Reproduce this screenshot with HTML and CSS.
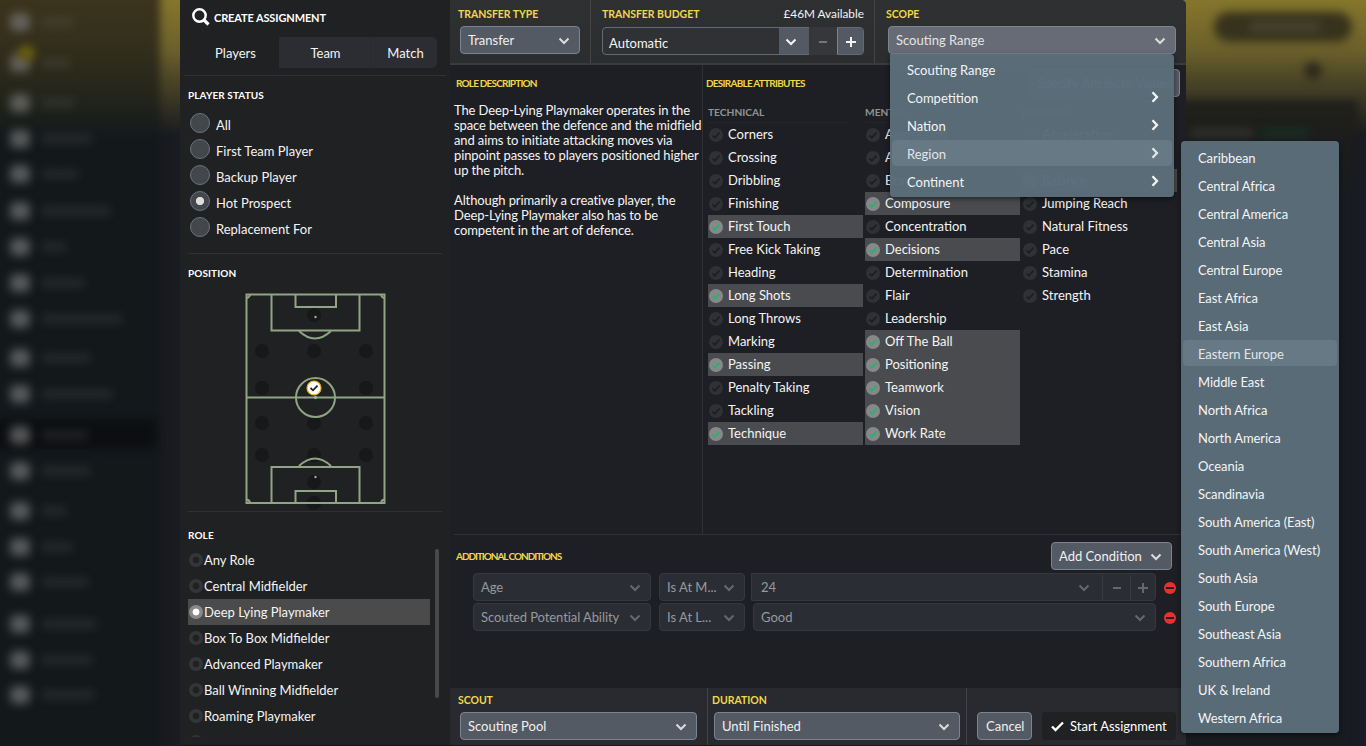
FILE: index.html
```html
<!DOCTYPE html>
<html lang="en">
<head>
    <meta charset="UTF-8">
    <meta name="viewport" content="width=device-width, initial-scale=1.0">
    <title>Create Assignment</title>
    <link rel="stylesheet" href="styles.css">
</head>
<body>
    <!-- Shared icons -->
    <svg class="sprite" width="0" height="0">
        <symbol id="down" viewBox="0 0 12 8"><path d="M1.5 1.5 6 6l4.500-4.500" fill="none" stroke="currentColor" stroke-width="2"/></symbol>
        <symbol id="right" viewBox="0 0 8 12"><path d="M1.500 1.200 6 6l-4.500 4.800" fill="none" stroke="currentColor" stroke-width="2.300"/></symbol>
        <symbol id="minus" viewBox="0 0 10 10"><path d="M1 5h8" stroke="currentColor" stroke-width="2"/></symbol>
        <symbol id="plus" viewBox="0 0 10 10"><path d="M0 5h10M5 0v10" stroke="currentColor" stroke-width="2"/></symbol>
        <symbol id="tick" viewBox="0 0 14 14"><circle class="disc" cx="7" cy="7" r="7"/><path class="mark" d="m3.500 7.500 2.300 2.200 4.700-5" fill="none"/></symbol>
        <symbol id="remove" viewBox="0 0 12 12"><circle cx="6" cy="6" r="6" fill="#e83030"/><path d="M2 6h8" stroke="#1e1f23" stroke-width="2"/></symbol>
    </svg>

    <div class="backdrop">
        <div class="glow"></div>
        <div class="nav"></div>
        <div class="nav-active"></div>
        <div class="pill"></div>
        <div class="pill-text"></div>
        <div class="dot"></div>
        <div class="card"></div>
        <div class="card-text"></div>
        <div class="card-green"></div>
        <div id="navItems"></div>
    </div>

    <div class="dialog">
        <aside class="side">
            <header class="side-head">
                <svg width="18" height="18" viewBox="0 0 18 18"><circle cx="7.500" cy="7.500" r="6.200" fill="none" stroke="#fff" stroke-width="2.500"/><path d="m12 12 4.500 4.500" stroke="#fff" stroke-width="3.200"/></svg>
                <h1>CREATE ASSIGNMENT</h1>
            </header>
            <div class="tabs">
                <span class="tab active">Players</span>
                <span class="tab">Team</span>
                <span class="tab">Match</span>
            </div>

            <section class="status">
                <h2>PLAYER STATUS</h2>
                <div class="radio"><i></i><span>All</span></div>
                <div class="radio"><i></i><span>First Team Player</span></div>
                <div class="radio"><i></i><span>Backup Player</span></div>
                <div class="radio on"><i></i><span>Hot Prospect</span></div>
                <div class="radio"><i></i><span>Replacement For</span></div>
            </section>

            <section class="position">
                <h2>POSITION</h2>
                <svg class="pitch" width="142" height="220" viewBox="0 0 142 220">
                    <g fill="#161819">
                        <circle cx="70" cy="24" r="7"/>
                        <circle cx="18" cy="60" r="7"/><circle cx="70" cy="60" r="7"/><circle cx="122" cy="60" r="7"/>
                        <circle cx="18" cy="97" r="7"/><circle cx="122" cy="97" r="7"/>
                        <circle cx="18" cy="132" r="7"/><circle cx="70" cy="132" r="7"/><circle cx="122" cy="132" r="7"/>
                        <circle cx="18" cy="164" r="7"/><circle cx="70" cy="164" r="7"/><circle cx="122" cy="164" r="7"/>
                        <circle cx="70" cy="191" r="7"/><circle cx="70" cy="212" r="7"/>
                    </g>
                    <g fill="none" stroke="#8fa584" stroke-width="2">
                        <path d="M2.500 3.500h138v208.500H2.500zM2.500 106.500h138"/>
                        <path d="M27.500 3.500v36h88v-36M51.500 3.500v12.500h40.500V3.500"/>
                        <path d="M27.500 212v-36h88v36M51.500 212v-12h40.500v12"/>
                        <path d="M55 40q16 15 32 0M55 175q16-15 32 0" />
                        <circle cx="71.500" cy="106.500" r="19.500"/>
                        <path d="M2.500 7a4 4 0 0 0 3.500-3.500M140.500 7a4 4 0 0 1-3.500-3.500M2.500 208.500a4 4 0 0 1 3.500 3.500M140.500 208.500a4 4 0 0 0-3.500 3.500"/>
                    </g>
                    <g fill="#9bb38e"><circle cx="71.500" cy="26" r="1.200"/><circle cx="71.500" cy="106.500" r="1.700"/><circle cx="71.500" cy="186" r="1.200"/></g>
                    <circle cx="70" cy="97" r="7" fill="#fff" stroke="#eab51a" stroke-width="1.200"/>
                    <path d="m66.500 97 2.500 2.300 4.500-4.600" fill="none" stroke="#202123" stroke-width="1.800"/>
                </svg>
            </section>

            <section class="role">
                <h2>ROLE</h2>
                <div class="role-list">
                    <div class="role-item"><i></i>Any Role</div>
                    <div class="role-item"><i></i>Central Midfielder</div>
                    <div class="role-item on"><i></i>Deep Lying Playmaker</div>
                    <div class="role-item"><i></i>Box To Box Midfielder</div>
                    <div class="role-item"><i></i>Advanced Playmaker</div>
                    <div class="role-item"><i></i>Ball Winning Midfielder</div>
                    <div class="role-item"><i></i>Roaming Playmaker</div>
                    <div class="role-item"><i></i></div>
                    <div class="scrollbar"></div>
                </div>
            </section>
        </aside>

        <main class="main">
            <div class="topbar">
                <div class="cell type">
                    <h3>TRANSFER TYPE</h3>
                    <div class="select">Transfer<svg width="12" height="8"><use href="#down"/></svg></div>
                </div>
                <div class="cell budget">
                    <div class="budget-head"><h3>TRANSFER BUDGET</h3><span>£46M Available</span></div>
                    <div class="stepper">
                        <span class="value">Automatic</span>
                        <span class="step drop"><svg width="12" height="8"><use href="#down"/></svg></span>
                        <span class="step off"><svg width="10" height="10"><use href="#minus"/></svg></span>
                        <span class="step add"><svg width="10" height="10"><use href="#plus"/></svg></span>
                    </div>
                </div>
                <div class="cell scope">
                    <h3>SCOPE</h3>
                    <div class="select open">Scouting Range<svg width="12" height="8"><use href="#down"/></svg></div>
                </div>
            </div>

            <div class="middle">
                <section class="description">
                    <h3 class="tight">ROLE DESCRIPTION</h3>
                    <p>The Deep-Lying Playmaker operates in the<br>space between the defence and the midfield<br>and aims to initiate attacking moves via<br>pinpoint passes to players positioned higher<br>up the pitch.</p>
                    <p>Although primarily a creative player, the<br>Deep-Lying Playmaker also has to be<br>competent in the art of defence.</p>
                </section>
                <section class="attributes">
                    <div class="attr-head">
                        <h3 class="tight">DESIRABLE ATTRIBUTES</h3>
                        <div class="select specify">Specify Attribute Values</div>
                    </div>
                    <div class="attr-cols" id="attributes"></div>
                </section>
            </div>

            <section class="conditions">
                <div class="cond-head">
                    <h3 class="tight tighter">ADDITIONAL CONDITIONS</h3>
                    <div class="select">Add Condition<svg width="12" height="8"><use href="#down"/></svg></div>
                </div>
                <div class="cond">
                    <div class="select dim name">Age<svg width="12" height="8"><use href="#down"/></svg></div>
                    <div class="select dim op">Is At M...<svg width="12" height="8"><use href="#down"/></svg></div>
                    <div class="select dim number">
                        <span class="value">24</span>
                        <svg width="12" height="8"><use href="#down"/></svg>
                        <span class="mini"><svg width="10" height="10"><use href="#minus"/></svg></span>
                        <span class="mini last"><svg width="10" height="10"><use href="#plus"/></svg></span>
                    </div>
                    <svg class="remove" width="12" height="12"><use href="#remove"/></svg>
                </div>
                <div class="cond">
                    <div class="select dim name">Scouted Potential Ability<svg width="12" height="8"><use href="#down"/></svg></div>
                    <div class="select dim op">Is At L...<svg width="12" height="8"><use href="#down"/></svg></div>
                    <div class="select dim grade">Good<svg width="12" height="8"><use href="#down"/></svg></div>
                    <svg class="remove" width="12" height="12"><use href="#remove"/></svg>
                </div>
            </section>

            <footer class="bottombar">
                <div class="cell scout">
                    <h3>SCOUT</h3>
                    <div class="select">Scouting Pool<svg width="12" height="8"><use href="#down"/></svg></div>
                </div>
                <div class="cell duration">
                    <h3>DURATION</h3>
                    <div class="select">Until Finished<svg width="12" height="8"><use href="#down"/></svg></div>
                </div>
                <div class="cell actions">
                    <span class="select cancel">Cancel</span>
                    <span class="start"><svg width="13" height="11" viewBox="0 0 13 11"><path d="m1 5.500 3.500 3.500L12 1.500" fill="none" stroke="#fff" stroke-width="2.400"/></svg>Start Assignment</span>
                </div>
            </footer>
        </main>
    </div>

    <div class="menu scope-menu">
        <div class="item">Scouting Range</div>
        <div class="item">Competition<svg width="8" height="12"><use href="#right"/></svg></div>
        <div class="item">Nation<svg width="8" height="12"><use href="#right"/></svg></div>
        <div class="item hover">Region<svg width="8" height="12"><use href="#right"/></svg></div>
        <div class="item">Continent<svg width="8" height="12"><use href="#right"/></svg></div>
    </div>

    <div class="menu region-menu">
        <div class="item">Caribbean</div>
        <div class="item">Central Africa</div>
        <div class="item">Central America</div>
        <div class="item">Central Asia</div>
        <div class="item">Central Europe</div>
        <div class="item">East Africa</div>
        <div class="item">East Asia</div>
        <div class="item hover">Eastern Europe</div>
        <div class="item">Middle East</div>
        <div class="item">North Africa</div>
        <div class="item">North America</div>
        <div class="item">Oceania</div>
        <div class="item">Scandinavia</div>
        <div class="item">South America (East)</div>
        <div class="item">South America (West)</div>
        <div class="item">South Asia</div>
        <div class="item">South Europe</div>
        <div class="item">Southeast Asia</div>
        <div class="item">Southern Africa</div>
        <div class="item">UK &amp; Ireland</div>
        <div class="item">Western Africa</div>
    </div>

    <script src="script.js"></script>
</body>
</html>
```
FILE: styles.css
```css
* {
    box-sizing: border-box;
}
body {
    margin: 0;
    width: 1366px;
    height: 746px;
    overflow: hidden;
    position: relative;
    background: #191b20;
    color: #f4f4f4;
    font-family: Lato, "Liberation Sans", sans-serif;
    font-size: 13px;
    line-height: 15px;
}
h1, h2, h3, p {
    margin: 0;
}
svg {
    flex: none;
    display: block;
}
.sprite {
    position: absolute;
}

/* Blurred page behind the dialog */
.backdrop {
    position: absolute;
    inset: 0;
    overflow: hidden;
    background: linear-gradient(to right, #191b20 0, #191b20 1345px, #191b27 1366px);
}
.backdrop div {
    position: absolute;
}
.backdrop .glow {
    left: 0;
    right: 0;
    top: 0;
    height: 135px;
    background: linear-gradient(#85762c, #6b602b 50px, #4b4527 80px, #191b20);
}
.backdrop .nav {
    left: -10px;
    top: -10px;
    width: 170px;
    height: 766px;
    background: linear-gradient(#3d341c, #35301c 50px, #26261b 100px, #13181b 150px);
    filter: blur(4px);
}
.backdrop .nav-active {
    left: -10px;
    top: 420px;
    width: 166px;
    height: 28px;
    background: #0d0e10;
    filter: blur(4px);
}
.backdrop .pill {
    left: 1214px;
    top: 12px;
    width: 138px;
    height: 30px;
    border-radius: 15px;
    background: #37321c;
    filter: blur(5px);
}
.backdrop .pill-text {
    left: 1250px;
    top: 21px;
    width: 70px;
    height: 11px;
    background: #47422f;
    filter: blur(5px);
}
.backdrop .dot {
    left: 1304px;
    top: 62px;
    width: 18px;
    height: 18px;
    border-radius: 9px;
    background: #2e2a1a;
    filter: blur(4px);
}
.backdrop .card {
    left: 1170px;
    top: 100px;
    width: 188px;
    height: 670px;
    background: linear-gradient(#21201b, #1b1c1c 50px, #181b20 100px);
    filter: blur(4px);
}
.backdrop .card-text {
    left: 1190px;
    top: 128px;
    width: 64px;
    height: 10px;
    background: #2e2e2a;
    filter: blur(4px);
}
.backdrop .card-green {
    left: 1260px;
    top: 128px;
    width: 50px;
    height: 10px;
    background: #182c22;
    filter: blur(4px);
}
.backdrop #navItems {
    left: 0;
    top: 0;
}
.nav-icon {
    left: 10px;
    width: 20px;
    height: 18px;
    border-radius: 6px;
    background: rgba(125, 125, 125, .65);
    filter: blur(5px);
}
.nav-line {
    left: 42px;
    height: 8px;
    background: rgba(110, 110, 110, .24);
    filter: blur(5px);
}
.nav-badge {
    left: 18px;
    top: 45px;
    width: 17px;
    height: 16px;
    border-radius: 8px;
    background: #665c0f;
    filter: blur(4px);
}

.dialog {
    position: relative;
    margin-left: 180px;
    width: 1006px;
    height: 746px;
    display: flex;
    border-top-right-radius: 5px;
    overflow: hidden;
    background: #1e1f24;
    border-bottom: 1px solid #1c1218;
}

/* Left panel */
.side {
    width: 270px;
    background: #202123;
    padding: 0 8px;
    display: flex;
    flex-direction: column;
}
.side-head {
    height: 36px;
    padding: 8px 0 0 4px;
    display: flex;
    gap: 4px;
}
.side-head h1 {
    font-size: 11px;
    line-height: 20px;
    font-weight: 700;
    letter-spacing: -.120px;
    color: #fff;
}
.tabs {
    display: flex;
    height: 40px;
    margin: 0 -4px;
    padding: 1px 9px 7px 4px;
    border-bottom: 1px solid #303133;
}
.tab {
    width: 91px;
    background: #2c2d33;
    padding-left: 2px;
    text-align: center;
    line-height: 33px;
}
.tab.active {
    background: none;
    padding-left: 4px;
}
.tab:last-child {
    flex: 1;
    border-radius: 0 5px 5px 0;
    border-left: 1px solid #292a2f;
    padding-left: 3px;
}
.side h2 {
    font-size: 10px;
    font-weight: 700;
    line-height: 14px;
    letter-spacing: .100px;
    color: #fff;
}
.status {
    height: 178px;
    padding-top: 12px;
    border-bottom: 1px solid #303133;
}
.status h2 {
    margin-bottom: 8px;
}
.radio {
    height: 26px;
    padding: 3px 0 0 2px;
    display: flex;
    gap: 6px;
}
.radio i {
    width: 20px;
    height: 20px;
    border: 1px solid #6a7480;
    border-radius: 50%;
    background: #43474b;
}
.radio.on i {
    background: radial-gradient(#dedede 3.700px, #43474b 4.500px);
}
.radio span {
    line-height: 24px;
}
.position {
    height: 258px;
    padding-top: 12px;
    border-bottom: 1px solid #303133;
}
.pitch {
    margin: 11px 0 0 56px;
}
.role {
    padding-top: 16px;
}
.role-list {
    position: relative;
    height: 190px;
    margin-top: 5px;
    overflow: hidden;
}
.role-item {
    width: 242px;
    height: 26px;
    padding-left: 1px;
    display: flex;
    align-items: center;
    gap: 1px;
    line-height: 17px;
}
.role-item i {
    width: 14px;
    height: 14px;
    border-radius: 50%;
    background: radial-gradient(#202123 3px, #343537 3.800px);
}
.role-item.on {
    background: #4a4b4a;
}
.role-item.on i {
    background: radial-gradient(#fff 3px, #898a89 3.800px);
}
.scrollbar {
    position: absolute;
    left: 247px;
    top: 2px;
    width: 4px;
    height: 149px;
    border-radius: 2px;
    background: #48494b;
}

/* Main area */
.main {
    flex: 1;
    display: flex;
    flex-direction: column;
}
h3 {
    font-size: 10.500px;
    font-weight: 700;
    line-height: 14px;
    letter-spacing: -.050px;
    color: #f0d848;
}
h3.tight {
    font-size: 10px;
    letter-spacing: -.800px;
}
.attr-head h3.tight {
    letter-spacing: -.750px;
}
h3.tighter {
    letter-spacing: -1.050px;
}
.topbar {
    height: 65px;
    display: flex;
    background: linear-gradient(#2f3032, #2c2d2f);
    border-bottom: 2px solid #3a3b3d;
}
.cell {
    border-right: 1px solid #434446;
}
.cell:last-child {
    border-right: 0;
}
.select {
    height: 28px;
    padding: 1px 9px 0 7px;
    display: flex;
    align-items: center;
    justify-content: space-between;
    border: 1px solid #7b8491;
    border-radius: 4px;
    background: #545a64;
    white-space: nowrap;
    color: #f0f0f0;
}
.select svg {
    color: #dcdcdc;
}
.type {
    width: 141px;
    padding: 7px 10px 0 8px;
}
.type .select, .scope .select {
    margin: 5px 0 0 2px;
}
.budget {
    width: 284px;
    padding: 7px 10px 0 11px;
}
.budget-head {
    display: flex;
    justify-content: space-between;
    height: 20px;
}
.budget-head h3 {
    line-height: 15px;
}
.budget-head span {
    font-size: 11.800px;
    line-height: 14px;
}
.stepper {
    height: 28px;
    display: flex;
    border: 1px solid #636a75;
    border-radius: 4px;
    background: #303134;
}
.stepper .value {
    flex: 1;
    padding-left: 6px;
    line-height: 30px;
}
.step {
    display: flex;
    align-items: center;
    justify-content: center;
    padding-top: 2px;
}
.drop {
    width: 30px;
    background: #545a64;
    padding-right: 6px;
}
.off {
    width: 28px;
    color: #747678;
    margin: -1px 0;
    background: #36373a;
}
.add {
    width: 26px;
    background: #545a64;
    border-radius: 0 3px 3px 0;
    border-left: 1px solid #7b8491;
}
.scope {
    flex: 1;
    padding: 7px 10px 0 11px;
}
.select.open {
    background: #666b76;
    color: #e4e4e4;
}

.middle {
    height: 470px;
    display: flex;
    margin-left: 4px;
    border-bottom: 1px solid #303136;
}
.description {
    width: 249px;
    padding-top: 11px;
    border-right: 1px solid #303136;
    white-space: nowrap;
}
.description h3 {
    padding-left: 2px;
    margin-bottom: 13px;
}
.description p {
    margin-bottom: 15px;
    letter-spacing: -.115px;
}
.attributes {
    flex: 1;
    padding: 4px 6px 0 3px;
}
.attr-head {
    display: flex;
    justify-content: space-between;
    height: 36px;
}
.attr-head h3 {
    line-height: 28px;
}
.specify {
    width: 151px;
    padding-left: 7px;
}
.attr-cols {
    display: flex;
    gap: 2px;
    padding-left: 2px;
}
.attr-col {
    width: 155px;
}
.attr-title {
    height: 18px;
    width: 140px;
    font-size: 10.200px;
    font-weight: 700;
    line-height: 15px;
    color: #929394;
    border-bottom: 1px solid #24252a;
}
.attr {
    height: 23px;
    padding-left: 1px;
    display: flex;
    align-items: center;
    gap: 5px;
    line-height: 17px;
}
.attr svg {
    --disc: #303135;
    --mark: #1d1e22;
}
.attr.on {
    background: #4a4b4e;
}
.attr.on svg {
    --disc: #87888a;
    --mark: #27b36c;
}
.disc {
    fill: var(--disc);
}
.mark {
    stroke: var(--mark);
    stroke-width: 1.700;
}

.conditions {
    height: 153px;
    padding-left: 6px;
}
.cond-head {
    height: 35px;
    padding: 7px 14px 0 0;
    display: flex;
    justify-content: space-between;
}
.cond-head .select {
    width: 121px;
}
.cond-head h3 {
    line-height: 29px;
}
.cond {
    display: flex;
    align-items: center;
    height: 28px;
    margin: 3px 0 2px 17px;
    gap: 8px;
}
.cond + .cond {
    margin-top: 2px;
}
.dim {
    background: #2b2d34;
    border-color: #36383d;
    color: #97999d;
}
.dim svg {
    color: #66686d;
}
.remove {
    margin-top: 2px;
}
.name {
    width: 178px;
    letter-spacing: -.080px;
}
.op {
    width: 86px;
}
.number {
    width: 405px;
    margin-left: -2px;
    padding-right: 0;
    border-radius: 0 4px 4px 0;
}
.number .value {
    flex: 1;
    padding-left: 2px;
}
.mini {
    width: 28px;
    height: 26px;
    border-left: 1px solid #393c46;
    display: flex;
    align-items: center;
    justify-content: center;
}
.number > svg {
    margin-right: 12px;
}
.mini.last {
    width: 25px;
}
.grade {
    width: 403px;
}

.bottombar {
    flex: 1;
    display: flex;
    background: #292a2f;
}
.bottombar h3 {
    margin-bottom: 5px;
}
.scout {
    width: 258px;
    padding: 5px 10px 0 8px;
}
.duration {
    width: 259px;
    padding: 5px 6px 0 4px;
}
.bottombar .cell > div {
    margin-left: 2px;
}
.actions {
    flex: 1;
    display: flex;
    gap: 10px;
    padding: 24px 10px 0;
}
.cancel {
    width: 55px;
    padding: 1px 8px 0;
}
.start {
    width: 134px;
    height: 28px;
    padding: 1px 0 0 9px;
    display: flex;
    align-items: center;
    gap: 6px;
    border-radius: 4px;
    background: #202123;
    color: #fff;
    white-space: nowrap;
}

/* Open menus */
.menu {
    position: absolute;
    padding: 2px;
    border-radius: 4px;
    background: rgba(90, 109, 121, .98);
    box-shadow: 0 2px 5px rgba(0, 0, 0, .5);
}
.item {
    height: 26px;
    margin-bottom: 2px;
    padding: 3px 13px 0 15px;
    display: flex;
    align-items: center;
    justify-content: space-between;
    border-radius: 4px;
    white-space: nowrap;
}
.item svg {
    margin-top: -4px;
}
.item.hover {
    background: #667984;
    color: #e2e6e8;
}
.scope-menu {
    left: 890px;
    top: 54px;
    width: 284px;
    height: 143px;
    border-top-left-radius: 0;
}
.region-menu {
    left: 1181px;
    top: 141px;
    width: 158px;
    height: 592px;
    padding-top: 3px;
    letter-spacing: -.070px;
}
```
FILE: script.js
```js
// Attribute columns, '*' marks the ones wanted for the selected role
const attributes = {
    TECHNICAL: ['Corners', 'Crossing', 'Dribbling', 'Finishing', '*First Touch', 'Free Kick Taking', 'Heading',
        '*Long Shots', 'Long Throws', 'Marking', '*Passing', 'Penalty Taking', 'Tackling', '*Technique'],
    MENTAL: ['Aggression', 'Anticipation', 'Bravery', '*Composure', 'Concentration', '*Decisions', 'Determination',
        'Flair', 'Leadership', '*Off The Ball', '*Positioning', '*Teamwork', '*Vision', '*Work Rate'],
    PHYSICAL: ['Acceleration', 'Agility', '*Balance', 'Jumping Reach', 'Natural Fitness', 'Pace', 'Stamina', 'Strength']
};

document.getElementById('attributes').innerHTML = Object.keys(attributes).map(title => {
    const rows = attributes[title].map(name => {
        const on = name[0] === '*';
        return `<div class="attr${on ? ' on' : ''}"><svg width="14" height="14"><use href="#tick"/></svg>${name.replace('*', '')}</div>`;
    }).join('');
    return `<div class="attr-col"><div class="attr-title">${title}</div>${rows}</div>`;
}).join('');

// Blurred sidebar entries: [y centre, label width]
const navItems = [[22, 32], [63, 28], [103, 32], [139, 50], [174, 36], [211, 68], [247, 24], [283, 42], [319, 80],
    [358, 48], [394, 70], [435, 46], [471, 48], [511, 24], [547, 30], [582, 46], [624, 54], [660, 50], [695, 52]];

document.getElementById('navItems').innerHTML = navItems.map(([y, width]) =>
    `<div class="nav-icon" style="top: ${y - 9}px"></div><div class="nav-line" style="top: ${y - 4}px; width: ${width}px"></div>`
).join('') + '<div class="nav-badge"></div>';
```
